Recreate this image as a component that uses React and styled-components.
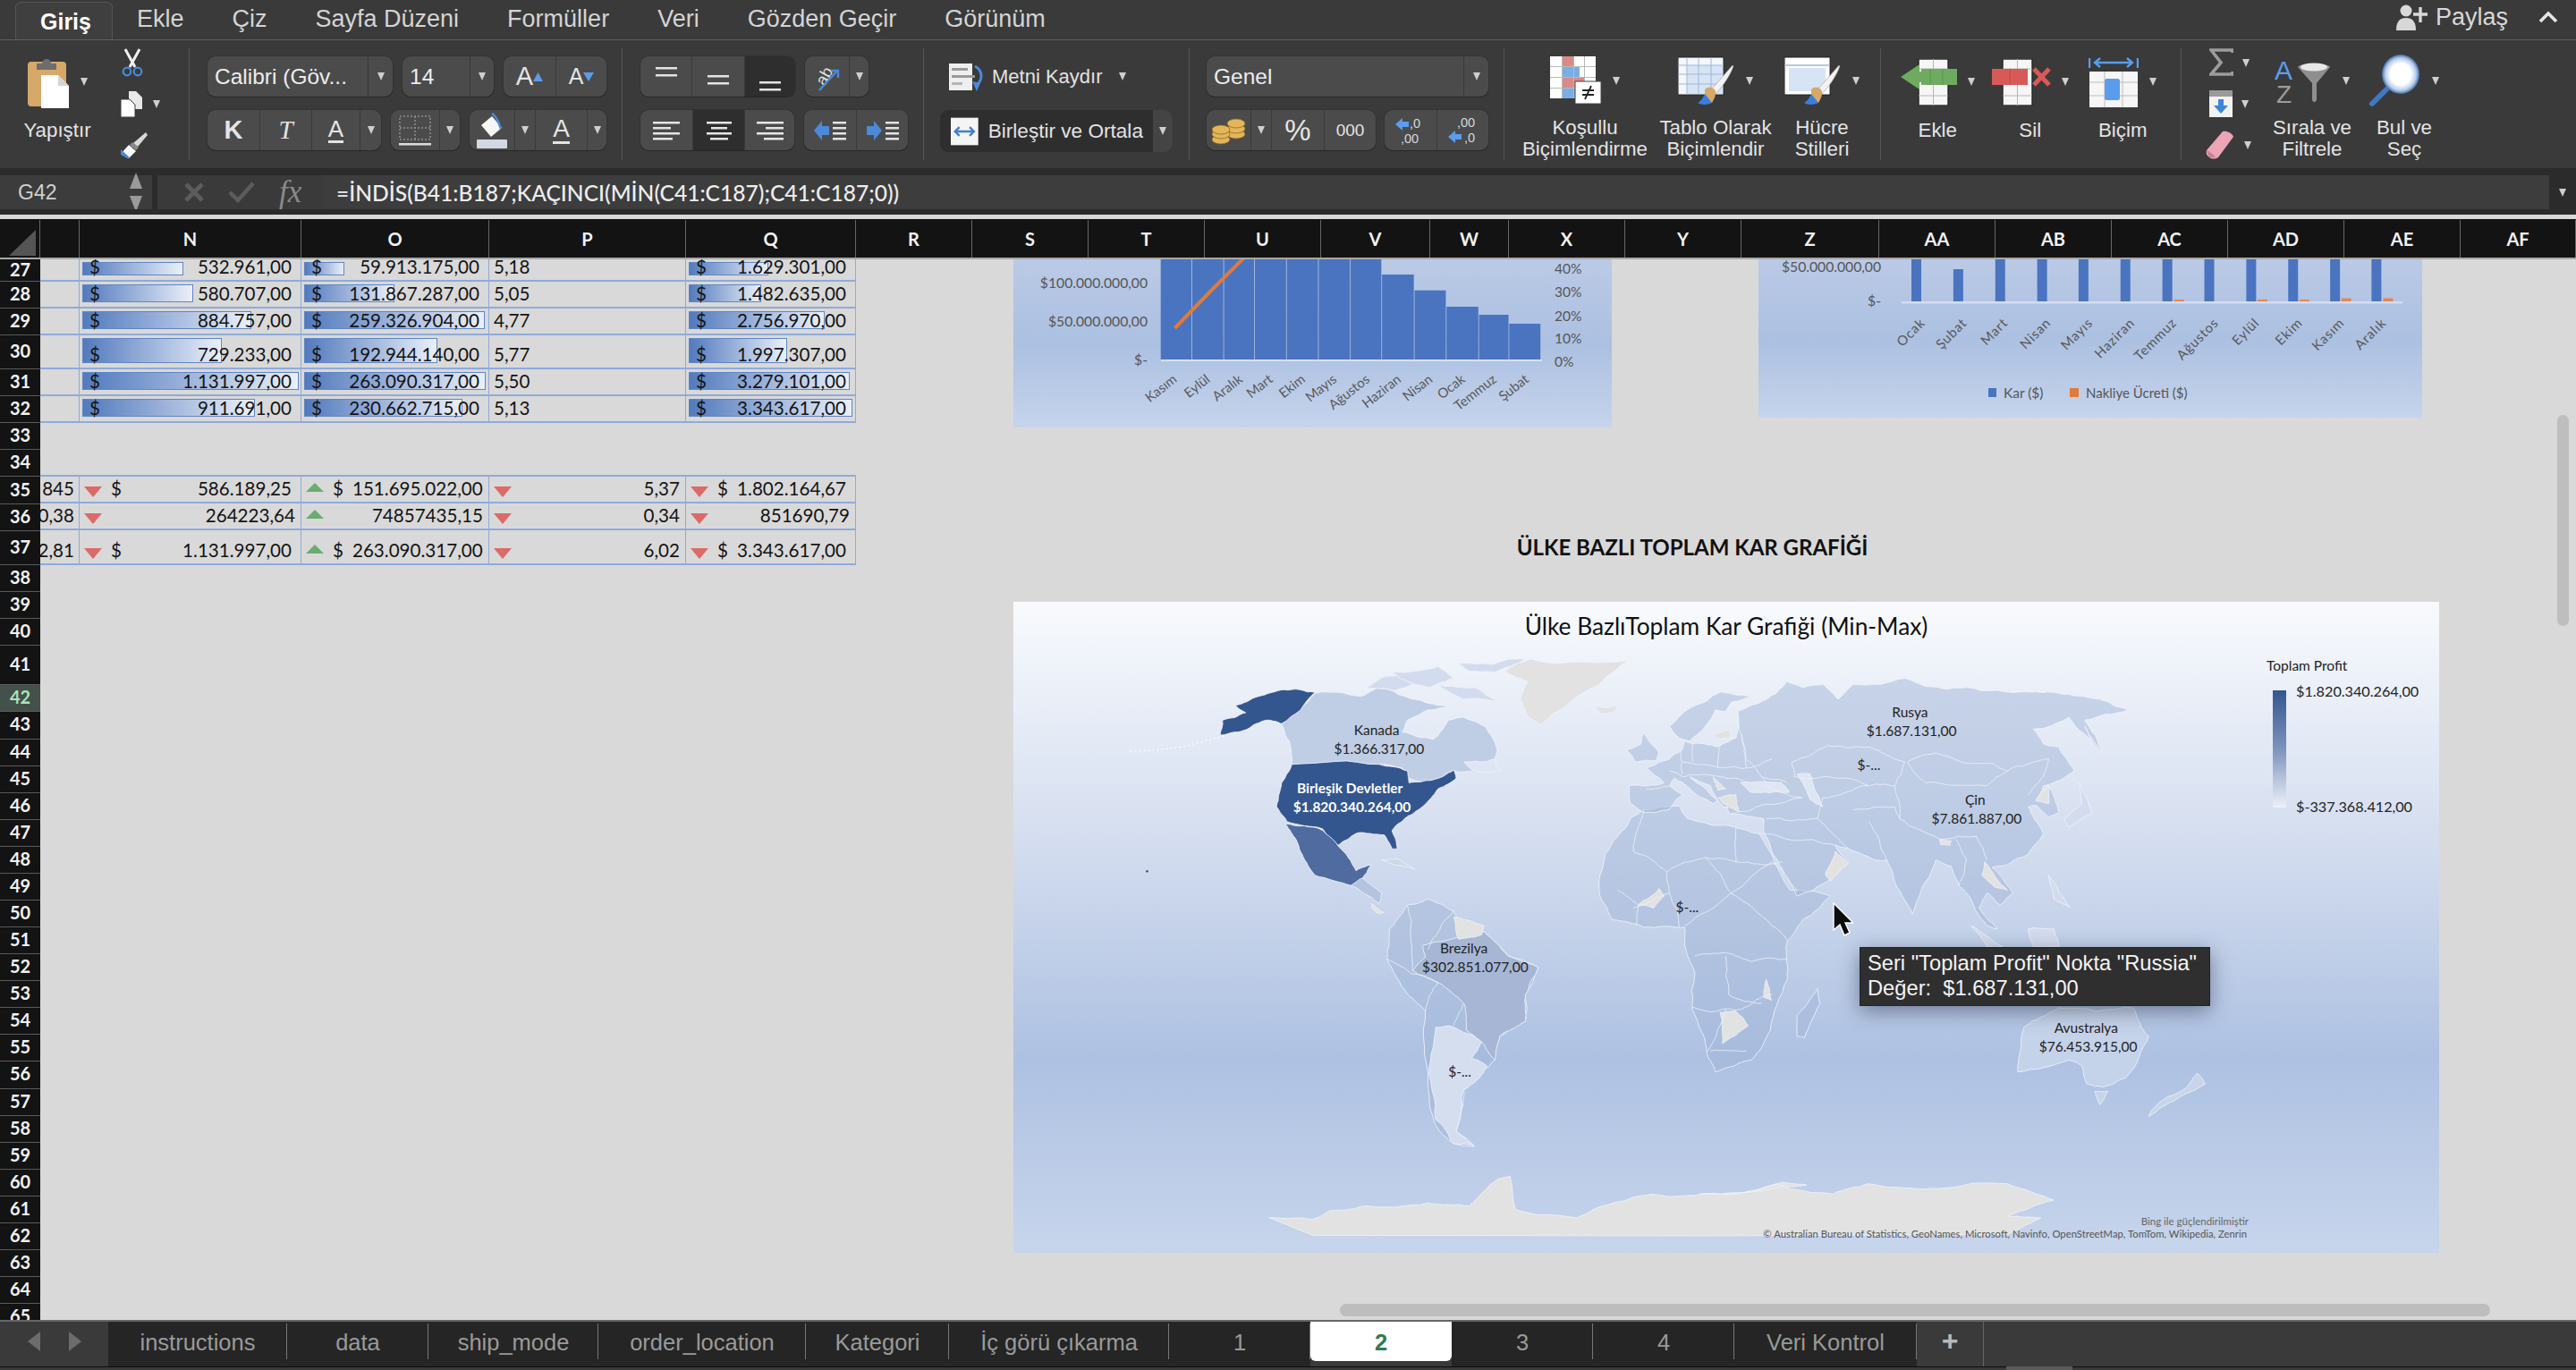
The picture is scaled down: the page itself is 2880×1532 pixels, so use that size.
import React from 'react';
import styled, { createGlobalStyle } from 'styled-components';

const GlobalStyle = createGlobalStyle`
  html, body { margin: 0; padding: 0; background: #2b2b2b; }
  * { box-sizing: border-box; }
`;

const ui = '"Liberation Sans", Arial, sans-serif';
const cal = 'Lato, "Open Sans", sans-serif';

const Page = styled.div`
  width: 2880px;
  height: 1532px;
  display: flex;
  flex-direction: column;
  overflow: hidden;
  font-family: ${ui};
  color: #e2e2e2;
`;

/* ---- menu tabs ---- */
const MenuBar = styled.div`
  height: 45px;
  flex: none;
  display: flex;
  align-items: stretch;
  padding-left: 17px;
  background: #3a3a3a;
  border-bottom: 1px solid #5c5c5c;
`;
const MenuTab = styled.div`
  padding: 0 ${p => (p.$active ? 23 : 27)}px 0 27px;
  font-size: ${p => (p.$active ? 25 : 27)}px;
  line-height: 42px;
  color: ${p => (p.$active ? '#fff' : '#d4d4d4')};
  font-weight: ${p => (p.$active ? 700 : 400)};
  background: ${p => (p.$active ? '#3f3f3f' : 'transparent')};
  border: ${p => (p.$active ? '1px solid #555' : 'none')};
  border-bottom: none;
  border-radius: 6px 6px 0 0;
  margin-top: ${p => (p.$active ? '2px' : '0')};
`;
const Share = styled.div`
  margin-left: auto;
  display: flex;
  align-items: center;
  gap: 8px;
  padding-right: 20px;
  font-size: 27px;
  color: #d8d8d8;
  height: 38px;
`;
const ShareGap = styled.span`
  width: 18px;
`;

/* ---- ribbon ---- */
const Ribbon = styled.div`
  height: 143px;
  flex: none;
  display: flex;
  padding-top: 9px;
  background: #3a3a3a;
`;
const Group = styled.div`
  width: ${p => p.$w}px;
  height: 125px;
  flex: none;
  display: flex;
  padding-left: ${p => p.$pl || 0}px;
  border-right: ${p => (p.$last ? 'none' : '1px solid #565656')};
`;
const Stack = styled.div`
  display: flex;
  flex-direction: column;
  gap: 15px;
  padding-top: 9px;
`;
const Line = styled.div`
  display: flex;
  gap: ${p => p.$gap || 11}px;
  height: 45px;
`;
const Seg = styled.div`
  width: ${p => p.$w}px;
  height: 45px;
  display: flex;
  align-items: stretch;
  background: #4b4b4b;
  border-radius: 9px;
  box-shadow: 0 1px 0 #262626, 0 0 0 1px #333;
  overflow: hidden;
`;
const SegBtn = styled.div`
  width: ${p => (p.$w ? `${p.$w}px` : 'auto')};
  flex: ${p => (p.$w ? 'none' : '1')};
  display: flex;
  align-items: center;
  justify-content: ${p => (p.$left ? 'flex-start' : 'center')};
  padding-left: ${p => (p.$left ? '8px' : '0')};
  font-size: 24.5px;
  background: ${p => (p.$on ? '#2e2e2e' : 'transparent')};
  color: #ededed;
  & + & { border-left: 1px solid #3a3a3a; }
`;
const GlyphA = styled.span`
  font-size: ${p => p.$size || 29}px;
  font-weight: ${p => (p.$bold ? 700 : 400)};
  font-style: ${p => (p.$italic ? 'italic' : 'normal')};
  font-family: ${p => (p.$serif ? '"Liberation Serif", serif' : ui)};
  color: #e4e4e4;
  line-height: 1;
  border-bottom: ${p => (p.$under ? '3px solid #e4e4e4' : 'none')};
`;
const Caret = styled.i`
  display: block;
  flex: none;
  width: 0;
  height: 0;
  border-left: 4.5px solid transparent;
  border-right: 4.5px solid transparent;
  border-top: 9px solid #cfcfcf;
`;
const BigTool = styled.div`
  width: ${p => p.$w}px;
  flex: none;
  display: flex;
  flex-direction: column;
  align-items: center;
`;
const ToolArt = styled.div`
  height: 80px;
  display: flex;
  align-items: center;
  gap: 12px;
  padding-bottom: 5px;
`;
const ToolLabel = styled.div`
  font-size: 22.3px;
  line-height: 24px;
  text-align: center;
  color: #e4e4e4;
  white-space: nowrap;
`;
const SmallCol = styled.div`
  width: ${p => p.$w}px;
  flex: none;
  display: flex;
  flex-direction: column;
  gap: 14px;
`;
const SmallTool = styled.div`
  height: 32px;
  display: flex;
  align-items: center;
  gap: 10px;
  padding-left: ${p => p.$pl || 0}px;
`;
const WrapBtn = styled.div`
  height: 45px;
  display: flex;
  align-items: center;
  gap: 8px;
  padding-left: 10px;
  font-size: 22px;
`;
const WrapGap = styled.span`
  width: 2px;
`;
const MergeBtn = styled.div`
  width: 260px;
  height: 47px;
  display: flex;
  align-items: center;
  gap: 11px;
  padding-left: 12px;
  font-size: 22.6px;
  white-space: nowrap;
  background: #2e2e2e;
  border-radius: 9px;
  position: relative;
  overflow: hidden;
`;
const MergeEnd = styled.div`
  margin-left: auto;
  width: 23px;
  height: 100%;
  background: #444;
  display: flex;
  align-items: center;
  justify-content: center;
`;

/* ---- formula bar ---- */
const Strip = styled.div`
  height: ${p => p.$h}px;
  flex: none;
  background: ${p => p.$c};
`;
const FormulaBar = styled.div`
  height: 38px;
  flex: none;
  display: flex;
  background: #2b2b2b;
  align-items: stretch;
`;
const NameBox = styled.div`
  width: 170px;
  flex: none;
  display: flex;
  align-items: center;
  justify-content: space-between;
  padding: 0 11px 0 20px;
  font-size: 23px;
  color: #d0d0d0;
  background: #3c3c3c;
`;
const Updown = styled.div`
  display: flex;
  flex-direction: column;
  gap: 8px;
`;
const FxZone = styled.div`
  width: 186px;
  margin-left: 6px;
  flex: none;
  display: flex;
  align-items: center;
  gap: 27px;
  padding-left: 30px;
  background: #3a3a3a;
`;
const FxMark = styled.span`
  font: italic 35px "Liberation Serif", serif;
  color: #8b8b8b;
`;
const FormulaField = styled.div`
  flex: 1;
  display: flex;
  align-items: center;
  padding-left: 14px;
  font-family: ${cal};
  font-size: 24.6px;
  font-weight: 500;
  color: #ededed;
  background: #3d3d3d;
`;
const FieldEnd = styled.div`
  width: 30px;
  flex: none;
  display: flex;
  align-items: center;
  justify-content: center;
  background: #2b2b2b;
`;

/* ---- sheet ---- */
const ColHeader = styled.div`
  height: 44px;
  flex: none;
  display: flex;
  background: #131313;
  border-bottom: 2px solid #a8a8a8;
`;
const Corner = styled.div`
  width: 45px;
  flex: none;
  border-right: 1px solid #666;
  display: flex;
  align-items: flex-end;
`;
const ColCell = styled.div`
  width: ${p => p.$w}px;
  flex: none;
  display: flex;
  align-items: center;
  justify-content: center;
  font-family: ${cal};
  font-size: 20px;
  font-weight: 700;
  color: #f2f2f2;
  border-right: 1px solid #666;
`;
const Body = styled.div`
  flex: 1;
  min-height: 0;
  display: flex;
  overflow: hidden;
`;
const RowHeads = styled.div`
  width: 45px;
  flex: none;
  display: flex;
  flex-direction: column;
  overflow: hidden;
  background: #131313;
`;
const RowHead = styled.div`
  height: ${p => p.$h}px;
  flex: none;
  display: flex;
  align-items: center;
  justify-content: center;
  padding-bottom: 3px;
  font-family: ${cal};
  font-size: 20px;
  font-weight: 700;
  color: ${p => (p.$on ? '#a9e4bd' : '#f2f2f2')};
  background: ${p => (p.$on ? '#44504a' : 'transparent')};
  border-bottom: 1.5px solid #5a5a5a;
`;
const Sheet = styled.div`
  flex: 1;
  position: relative;
  background: #d9d9d9;
  overflow: hidden;
`;
const DataRow = styled.div`
  height: ${p => p.$h}px;
  width: 912px;
  display: flex;
  border-bottom: ${p => (p.$ruled ? '2px solid #8eaadb' : 'none')};
`;
const DataCell = styled.div`
  width: ${p => p.$w}px;
  flex: none;
  position: relative;
  display: flex;
  align-items: flex-end;
  padding: 0 ${p => p.$pr ?? 10}px 2px ${p => p.$pl ?? 11}px;
  gap: ${p => (p.$tri ? 10 : 0)}px;
  font-family: ${cal};
  font-size: 20.6px;
  line-height: 26px;
  color: #141414;
  overflow: hidden;
  white-space: nowrap;
  border-right: 1.5px solid #8eaadb;
`;
const Clip = styled.div`
  width: 100%;
  display: flex;
  justify-content: flex-end;
  padding-right: 5px;
`;
const Money = styled.span`
  position: relative;
  margin-left: auto;
`;
const Dollar = styled.span`
  position: relative;
`;
const DataBar = styled.div`
  position: absolute;
  left: 3px;
  top: 3px;
  bottom: 5px;
  width: ${p => p.$w}px;
  background: linear-gradient(90deg, #527abd 0%, #97afd9 45%, #eaf0f9 100%);
  border: 1.5px solid #5f86c4;
`;
const Arrow = styled.svg`
  flex: none;
  width: 20px;
  height: ${p => (p.$up ? 10 : 12)}px;
  margin-bottom: ${p => (p.$up ? 9 : 3)}px;
`;

/* ---- floating objects on the sheet ---- */
const Floating = styled.div`
  position: absolute;
  left: ${p => p.$x - 45}px;
  top: ${p => p.$y - 288}px;
  width: ${p => p.$w}px;
  height: ${p => p.$h}px;
`;
const ChartTail = styled(Floating)`
  background: linear-gradient(180deg, #bdcce7 0%, #acc0e1 55%, #c6d4ec 100%);
`;
const ChartSvg = styled.svg`
  display: block;
  width: 100%;
  height: 100%;
`;
const SheetTitle = styled(Floating)`
  text-align: center;
  font-family: ${cal};
  font-size: 24px;
  font-weight: 700;
  color: #111;
  line-height: 30px;
  white-space: nowrap;
`;
const MapChart = styled(Floating)`
  background: linear-gradient(180deg, #f8fafd 0%, #dbe3f2 30%, #aec1e2 70%, #c7d5ec 100%);
`;
const MapTitle = styled.div`
  position: absolute;
  left: 0;
  right: 0;
  top: 11px;
  text-align: center;
  font-family: ${cal};
  font-size: 26.3px;
  line-height: 32px;
  color: #111;
`;
const Legend = styled.div`
  position: absolute;
  left: 1401px;
  top: 62px;
  font-family: ${cal};
  font-size: 15.5px;
  color: #222;
`;
const LegendBody = styled.div`
  position: relative;
  height: 132px;
  margin-top: 19px;
  padding-left: 7px;
`;
const LegendBar = styled.div`
  width: 15px;
  height: 131px;
  background: linear-gradient(180deg, #35568f 0%, #7c93bd 50%, #edf1f9 100%);
`;
const LegendTick = styled.div`
  position: absolute;
  left: 33px;
  top: ${p => p.$t}px;
  font-size: 16.2px;
  white-space: nowrap;
`;
const Tooltip = styled.div`
  position: absolute;
  left: 946px;
  top: 386px;
  width: 392px;
  height: 66px;
  padding: 3px 8px;
  background: #2f2f2f;
  border: 1px solid #1b2436;
  box-shadow: 0 6px 22px rgba(40, 50, 70, 0.5);
  font-size: 23.7px;
  line-height: 28px;
  color: #f4f4f4;
  white-space: pre;
`;
const Pointer = styled.svg`
  position: absolute;
  left: 915px;
  top: 336px;
`;

const VScroll = styled.div`
  position: absolute;
  left: 2814px;
  top: 174px;
  width: 13px;
  height: 236px;
  border-radius: 7px;
  background: #bebebe;
`;
const HScroll = styled.div`
  position: absolute;
  left: 1453px;
  top: 1168px;
  width: 1286px;
  height: 14px;
  border-radius: 7px;
  background: #bdbdbd;
`;

/* ---- sheet tabs ---- */
const TabBar = styled.div`
  height: 56px;
  flex: none;
  display: flex;
  background: #3a3a3a;
  border-top: 2px solid #666;
  position: relative;
`;
const TabNav = styled.div`
  width: 121px;
  height: 50px;
  flex: none;
  display: flex;
  align-items: center;
  justify-content: center;
  gap: 32px;
  background: #3a3a3a;
  padding-bottom: 6px;
`;
const SheetTab = styled.div`
  width: ${p => p.$w}px;
  height: ${p => (p.$active ? 44 : 50)}px;
  flex: none;
  display: flex;
  align-items: flex-start;
  justify-content: center;
  padding-top: 9px;
  font-size: 25.5px;
  color: ${p => (p.$active ? '#2f7a52' : '#9a9a9a')};
  font-weight: ${p => (p.$active ? 700 : 400)};
  background: ${p => (p.$active ? '#fff' : '#252525')};
  border-radius: ${p => (p.$active ? '0 0 6px 6px' : '0')};
  position: relative;
  &::after {
    content: '';
    position: absolute;
    right: 0;
    top: 2px;
    height: 40px;
    border-right: ${p => (p.$active ? 'none' : '1px solid #777')};
  }
`;
const AddTab = styled.div`
  width: 75px;
  height: 50px;
  flex: none;
  display: flex;
  align-items: center;
  justify-content: center;
  padding-bottom: 8px;
  background: #3a3a3a;
  border-right: 1px solid #666;
  font-size: 32px;
  font-weight: 700;
  color: #b8b8b8;
`;
const BottomLine = styled.div`
  position: absolute;
  left: 0;
  right: 0;
  bottom: 0;
  height: 4px;
  background: #3a3a3a;
  border-top: 1px solid #0c0c0c;
`;
const BottomThumb = styled.div`
  position: absolute;
  left: 2243px;
  bottom: 0;
  width: 74px;
  height: 4px;
  background: #5a5a5a;
`;

/* ---- ribbon icons ---- */
const PasteIcon = () => (
  <svg width="47" height="58" viewBox="0 0 47 58">
    <rect x="0" y="6" width="43" height="50" rx="4" fill="#d6a86a" />
    <path d="M10 15V8h6a5 5 0 0 1 10 0h6v7z" fill="#6d6d6d" />
    <path d="M15 21h19l12 12v25H15z" fill="#fff" />
    <path d="M34 21v12h12z" fill="#d5d5d5" />
  </svg>
);
const CutIcon = () => (
  <svg width="26" height="32" viewBox="0 0 26 32">
    <path d="M5 1l11 20M21 1L10 21" stroke="#f0f0f0" strokeWidth="3" fill="none" />
    <circle cx="7" cy="26" r="4.3" fill="none" stroke="#4a8ad8" strokeWidth="2.2" />
    <circle cx="19" cy="26" r="4.3" fill="none" stroke="#4a8ad8" strokeWidth="2.2" />
  </svg>
);
const CopyIcon = () => (
  <svg width="26" height="29" viewBox="0 0 26 29">
    <path d="M9 0h8l7 7v13H9z" fill="#e8e8e8" />
    <path d="M0 9h10l6 6v14H0z" fill="#fff" stroke="#3a3a3a" strokeWidth="1" />
  </svg>
);
const PainterIcon = () => (
  <svg width="34" height="30" viewBox="0 0 34 30">
    <path d="M31 1l2 3-11 13-5-4z" fill="#d8d8d8" />
    <path d="M16 12l7 6-3 3-7-6z" fill="#8a8a8a" />
    <path d="M12 15l8 7-8 8-9-5z" fill="#fff" />
    <path d="M3 20l10 9-3 1-7-4z" fill="#4a8ad8" />
  </svg>
);
const ParaLines = ({ rows, w = 26 }) => (
  <svg width={w} height="22" viewBox={`0 0 ${w} 22`}>
    {rows.map(([x, y, l]) => (
      <rect key={y} x={x} y={y} width={l} height="2.5" fill="#e6e6e6" />
    ))}
  </svg>
);
const BorderIcon = () => (
  <svg width="36" height="34" viewBox="0 0 36 34">
    <path d="M1 1h34v26H1zM18 1v26M1 14h34" fill="none" stroke="#8f8f8f" strokeWidth="1.5" strokeDasharray="2 2" />
    <rect x="0" y="31" width="36" height="2.5" fill="#ddd" />
  </svg>
);
const BucketIcon = () => (
  <svg width="36" height="40" viewBox="0 0 36 40">
    <path d="M6 14L18 4l11 13-12 10z" fill="#f6f6f6" />
    <path d="M18 1c4 2 7 8 10 17" fill="none" stroke="#4a8ad8" strokeWidth="2.5" />
    <rect x="1" y="30" width="34" height="10" rx="1" fill="#d3d9e2" />
  </svg>
);
const VAlignIcon = ({ y }) => (
  <svg width="26" height="34" viewBox="0 0 26 34">
    <rect x="1" y={y} width="24" height="2.5" fill="#e4e4e4" />
    <rect x="1" y={y + 8} width="24" height="2.5" fill="#e4e4e4" />
  </svg>
);
const OrientIcon = () => (
  <svg width="30" height="32" viewBox="0 0 30 32">
    <text x="2" y="22" transform="rotate(-60 11 16)" fontFamily={ui} fontSize="18" fill="#e4e4e4">ab</text>
    <path d="M6 31L27 8M19 9h8v8" stroke="#4a8ad8" strokeWidth="2.4" fill="none" />
  </svg>
);
const IndentIcon = ({ flip }) => (
  <svg width="38" height="26" viewBox="0 0 38 26">
    <path d={flip ? 'M1 8h8V2l9 11-9 11v-6H1z' : 'M18 8h-8V2L1 13l9 11v-6h8z'} fill="#4a8ad8" />
    {[3, 9, 15, 21].map(y => (
      <rect key={y} x="22" y={y} width="15" height="2.5" fill="#e4e4e4" />
    ))}
  </svg>
);
const WrapIcon = () => (
  <svg width="40" height="32" viewBox="0 0 40 32">
    <rect x="0" y="1" width="26" height="30" fill="#efefef" />
    <rect x="3" y="6" width="18" height="3" fill="#9a9a9a" />
    <rect x="3" y="14" width="26" height="3" fill="#9a9a9a" />
    <rect x="3" y="22" width="12" height="3" fill="#b5b5b5" />
    <path d="M29 4c9 5 9 15 2 21" fill="none" stroke="#4a8ad8" strokeWidth="3" />
    <path d="M26 21l9 2-4 9z" fill="#4a8ad8" />
  </svg>
);
const MergeIcon = () => (
  <svg width="32" height="32" viewBox="0 0 32 32">
    <rect width="32" height="32" fill="#f4f4f4" />
    <path d="M5 16h22M10 11l-5 5 5 5M22 11l5 5-5 5" fill="none" stroke="#3f7fd0" strokeWidth="2.5" />
  </svg>
);
const CoinsIcon = () => (
  <svg width="38" height="32" viewBox="0 0 38 32">
    <g fill="#e4b65a" stroke="#8a6a2a" strokeWidth="0.8">
      <ellipse cx="27" cy="20" rx="10" ry="5" />
      <ellipse cx="27" cy="14" rx="10" ry="5" />
      <ellipse cx="27" cy="8" rx="10" ry="5" />
      <ellipse cx="10" cy="26" rx="10" ry="5" />
      <ellipse cx="10" cy="20" rx="10" ry="5" />
      <ellipse cx="10" cy="15" rx="10" ry="5" />
    </g>
  </svg>
);
const DecIcon = ({ more }) => (
  <svg width="38" height="34" viewBox="0 0 38 34" fontFamily={ui} fontSize="14.5" fill="#d8d8d8">
    {more ? (
      <>
        <text x="12" y="13">,00</text>
        <path d="M16 24l-8-7v4H1v6h7v4z" fill="#5b9cec" transform="matrix(-1 0 0 1 18 0)" />
        <text x="20" y="30">,0</text>
      </>
    ) : (
      <>
        <path d="M2 10l8-7v4h7v6h-7v4z" fill="#5b9cec" />
        <text x="18" y="14">,0</text>
        <text x="8" y="31">,00</text>
      </>
    )}
  </svg>
);
const CondIcon = () => (
  <svg width="58" height="54" viewBox="0 0 58 54">
    <rect x="0" y="0" width="51" height="47" fill="#fff" />
    <rect x="14" y="0" width="12" height="11" fill="#d98a85" />
    <rect x="14" y="11" width="19" height="13" fill="#79aee6" />
    <rect x="14" y="24" width="24" height="12" fill="#d98a85" />
    <rect x="14" y="36" width="14" height="11" fill="#79aee6" />
    <path d="M13.5 0v47M26.5 0v47M38.5 0v47M0 11.5h51M0 23.5h51M0 35.5h51" stroke="#b9b9b9" strokeWidth="1" />
    <rect x="28" y="28" width="29" height="25" fill="#fff" stroke="#444" strokeWidth="1" />
    <path d="M36 38h13M36 43h13M46 33l-7 15" stroke="#222" strokeWidth="1.8" fill="none" />
  </svg>
);
const BrushOver = () => (
  <g>
    <path d="M61 10C52 20 44 30 36 38l5 5C50 34 58 22 62 11z" fill="#f2f2f2" stroke="#999" strokeWidth="0.6" />
    <path d="M30 37c4-4 10-3 12 2 1 5-3 11-4 13l-8-2z" fill="#d8a868" />
    <path d="M22 52c4-2 6-6 8-10l8 10c-3 2-12 3-16 0z" fill="#3a7fdc" />
  </g>
);
const TableIcon = () => (
  <svg width="64" height="54" viewBox="0 0 64 54">
    <rect x="0" y="1" width="51" height="42" fill="#f4f7fc" stroke="#222" strokeWidth="1" />
    <rect x="10" y="10" width="40" height="32" fill="#d6e4f6" />
    <path d="M10 1v42M23 1v42M37 1v42M0 10h51M0 20h51M0 31h51" stroke="#9fb6d6" strokeWidth="1" />
    <BrushOver />
  </svg>
);
const StyleIcon = () => (
  <svg width="64" height="54" viewBox="0 0 64 54">
    <rect x="0" y="1" width="51" height="42" fill="#fff" stroke="#222" strokeWidth="1" />
    <rect x="5" y="13" width="41" height="26" fill="#d6e4f6" />
    <path d="M0 10h51" stroke="#9fb6d6" strokeWidth="1.5" />
    <BrushOver />
  </svg>
);
const GridCol = ({ x, w }) => (
  <g>
    <rect x={x} y="0" width={w} height="52" fill="#f6f6f6" stroke="#242424" strokeWidth="1.4" />
    <path d={`M${x + w / 2} 0v52M${x} 11h${w}M${x} 41h${w}`} stroke="#b5b5b5" strokeWidth="1" />
  </g>
);
const InsertIcon = () => (
  <svg width="64" height="52" viewBox="0 0 64 52">
    <GridCol x={21} w={33} />
    <rect x="24" y="11" width="40" height="18" fill="#6eab60" />
    <path d="M34 11v18M48 11v18" stroke="#5a9550" />
    <path d="M22 6L1 20l21 14V26h3V14h-3z" fill="#6eab60" />
  </svg>
);
const DeleteIcon = () => (
  <svg width="66" height="52" viewBox="0 0 66 52">
    <GridCol x={12} w={33} />
    <rect x="0" y="11" width="40" height="18" fill="#d85a56" />
    <path d="M20 11v18" stroke="#b84a46" />
    <path d="M47 11l17 18M64 11L47 29" stroke="#d85a56" strokeWidth="5" />
  </svg>
);
const FormatIcon = () => (
  <svg width="56" height="56" viewBox="0 0 56 56">
    <path d="M1 1v11M55 1v11M7 6h42M13 1L7 6l6 5M43 1l6 5-6 5" stroke="#5b9cec" strokeWidth="2.4" fill="none" />
    <rect x="1" y="16" width="54" height="40" fill="#f6f6f6" />
    <path d="M1 28h54M1 43h54M18 16v40M38 16v40" stroke="#bcbcbc" strokeWidth="1" />
    <rect x="18" y="24" width="17" height="24" rx="2.5" fill="#5b9cec" />
  </svg>
);
const SigmaIcon = () => (
  <svg width="27" height="32" viewBox="0 0 27 32">
    <path d="M26 5V2H2l11 14L2 29h24v-3" fill="none" stroke="#9c9c9c" strokeWidth="3.6" />
  </svg>
);
const FillIcon = () => (
  <svg width="26" height="30" viewBox="0 0 26 30">
    <rect width="26" height="30" fill="#f2f2f2" />
    <rect width="26" height="7" fill="#9a9a9a" />
    <path d="M10 10h6v7h5l-8 9-8-9h5z" fill="#3f84dc" />
  </svg>
);
const EraserIcon = () => (
  <svg width="34" height="32" viewBox="0 0 34 32">
    <path d="M20 1c4-1 11 2 12 6L15 30c-3 2-7 2-10 0-3-2-4-5-3-8z" fill="#eba5b4" />
    <path d="M2 22c3 1 8 5 10 8l3 0L5 30z" fill="#c77f91" />
  </svg>
);
const SortIcon = () => (
  <svg width="64" height="50" viewBox="0 0 64 50" fontFamily={ui}>
    <text x="0" y="24" fontSize="30" fill="#5b9cec">A</text>
    <text x="2" y="50" fontSize="28" fill="#9c9c9c">Z</text>
    <path d="M26 10c2-5 34-5 36 0L47 28v18c0 4-5 4-5 0V28z" fill="#8f8f8f" />
    <ellipse cx="44" cy="10" rx="15" ry="4.5" fill="#e8e8e8" />
  </svg>
);
const FindIcon = () => (
  <svg width="58" height="58" viewBox="0 0 58 58">
    <defs>
      <radialGradient id="lens">
        <stop offset="0.55" stopColor="#fff" />
        <stop offset="0.82" stopColor="#b8cdea" />
        <stop offset="1" stopColor="#3f6eab" />
      </radialGradient>
    </defs>
    <path d="M20 38L3 55" stroke="#3f78c0" strokeWidth="6" strokeLinecap="round" />
    <ellipse cx="35" cy="22" rx="21" ry="22" fill="url(#lens)" />
  </svg>
);
const PersonPlus = () => (
  <svg width="36" height="30" viewBox="0 0 36 30">
    <circle cx="11" cy="8" r="6.5" fill="#d8d8d8" />
    <path d="M0 30c0-10 4-14 11-14s11 4 11 14z" fill="#d8d8d8" />
    <path d="M27 4v17M19 12h16" stroke="#d8d8d8" strokeWidth="3.4" />
  </svg>
);
const ChevronUp = () => (
  <svg width="22" height="14" viewBox="0 0 22 14">
    <path d="M2 12l9-9 9 9" fill="none" stroke="#e6e6e6" strokeWidth="3.6" />
  </svg>
);
const UpTri = () => (
  <svg width="14" height="18" viewBox="0 0 14 18"><path d="M7 0l7 18H0z" fill="#9a9a9a" /></svg>
);
const DownTri = () => (
  <svg width="14" height="18" viewBox="0 0 14 18"><path d="M0 0h14L7 18z" fill="#9a9a9a" /></svg>
);
const CrossMark = () => (
  <svg width="22" height="22" viewBox="0 0 22 22"><path d="M2 2l18 18M20 2L2 20" stroke="#5c5c5c" strokeWidth="5" /></svg>
);
const CheckMark = () => (
  <svg width="30" height="24" viewBox="0 0 30 24"><path d="M2 12l9 9L28 2" fill="none" stroke="#5c5c5c" strokeWidth="4.5" /></svg>
);
const SmallTriUp = ({ c }) => (
  <svg width="11" height="10" viewBox="0 0 11 10"><path d="M5.5 0L11 10H0z" fill={c} /></svg>
);
const SmallTriDown = ({ c }) => (
  <svg width="12" height="10" viewBox="0 0 12 10"><path d="M0 0h12L6 10z" fill={c} /></svg>
);

/* ---- sheet data ---- */
const COLS = [['', 44], ['N', 248], ['O', 210], ['P', 220], ['Q', 190], ['R', 130], ['S', 130], ['T', 130], ['U', 130], ['V', 122], ['W', 88], ['X', 130], ['Y', 130], ['Z', 154], ['AA', 130], ['AB', 130], ['AC', 130], ['AD', 130], ['AE', 130], ['AF', 129]];

const rowHeights = { 27: 25, 30: 38, 37: 38.5, 41: 44 };
const ROW_NUMS = Array.from({ length: 39 }, (_, i) => i + 27);

const BAR_ROWS = [
  { h: 25, n: ['532.961,00', 113], o: ['59.913.175,00', 45], p: '5,18', q: ['1.629.301,00', 89] },
  { h: 30, n: ['580.707,00', 124], o: ['131.867.287,00', 101], p: '5,05', q: ['1.482.635,00', 81] },
  { h: 30, n: ['884.757,00', 189], o: ['259.326.904,00', 202], p: '4,77', q: ['2.756.970,00', 152] },
  { h: 38, n: ['729.233,00', 156], o: ['192.944.140,00', 149], p: '5,77', q: ['1.997.307,00', 110] },
  { h: 30, n: ['1.131.997,00', 242], o: ['263.090.317,00', 203], p: '5,50', q: ['3.279.101,00', 180] },
  { h: 30, n: ['911.691,00', 193], o: ['230.662.715,00', 177], p: '5,13', q: ['3.343.617,00', 183] },
];
const ICON_ROWS = [
  { h: 30, m: '845', n: '586.189,25', o: '151.695.022,00', p: '5,37', q: '1.802.164,67', cur: true },
  { h: 30, m: '0,38', n: '264223,64', o: '74857435,15', p: '0,34', q: '851690,79', cur: false },
  { h: 38.5, m: '2,81', n: '1.131.997,00', o: '263.090.317,00', p: '6,02', q: '3.343.617,00', cur: true },
];

const BarCell = ({ w, val }) => (
  <DataCell $w={w}>
    <DataBar $w={val[1]} />
    <Dollar>$</Dollar>
    <Money>{val[0]}</Money>
  </DataCell>
);
const DownArrow = () => (
  <Arrow viewBox="0 0 20 12"><path d="M0 0h20L10 12z" fill="#dc6a68" /></Arrow>
);
const UpArrow = () => (
  <Arrow $up viewBox="0 0 20 10"><path d="M10 0l10 10H0z" fill="#69ad70" /></Arrow>
);

const MONTHS_A = [['Kasım', 340], ['Eylül', 398], ['Aralık', 455], ['Mart', 508], ['Ekim', 565], ['Mayıs', 620], ['Ağustos', 678], ['Haziran', 733], ['Nisan', 788], ['Ocak', 845], ['Temmuz', 900], ['Şubat', 957]];
const MONTHS_B = [['Ocak', 405], ['Şubat', 480], ['Mart', 553], ['Nisan', 630], ['Mayıs', 705], ['Haziran', 780], ['Temmuz', 855], ['Ağustos', 930], ['Eylül', 1003], ['Ekim', 1080], ['Kasım', 1155], ['Aralık', 1230]];
const PARETO = [[310, 280], [365, 280], [421, 280], [475, 280], [531, 280], [587, 280], [643, 280], [698, 305], [755, 322.7], [811, 341], [868, 350], [921, 360]];
const KAR_X = [388, 463, 538, 613, 687, 762, 837, 912, 987, 1062, 1137, 1211];

const LeftAxis = ({ x, items }) =>
  items.map(([t, y]) => (
    <text key={t} x={x} y={y} textAnchor="end" fontFamily={cal} fontSize="15.7" fill="#555">{t}</text>
  ));

const ParetoChart = () => (
  <ChartTail $x={1133} $y={270} $w={669} $h={206}>
    <ChartSvg viewBox="1133 270 669 206">
      {PARETO.map(([px, top], i) => {
        const x = 1100 + px / 1.568;
        const next = i < 11 ? 1100 + PARETO[i + 1][0] / 1.568 : 1723;
        return <rect key={px} x={x} y={top} width={next - x - 0.8} height={400 - top} fill="#4a74bf" />;
      })}
      <rect x="1298" y="400" width="426" height="2" fill="#d8dfef" />
      <polyline points="1313.5,365 1352,325 1392,285" fill="none" stroke="#e07b39" strokeWidth="4" />
      <LeftAxis x={1283} items={[['$100.000.000,00', 320], ['$50.000.000,00', 363], ['$-', 406]]} />
      {[['40%', 304], ['30%', 330], ['20%', 357], ['10%', 382], ['0%', 408]].map(([t, y]) => (
        <text key={t} x="1738" y={y} fontFamily={cal} fontSize="15.5" fill="#555">{t}</text>
      ))}
      {MONTHS_A.map(([m, px]) => {
        const x = 1100 + px / 1.568;
        return <text key={m} x={x} y="424" textAnchor="end" transform={`rotate(-38 ${x} 424)`} fontFamily={cal} fontSize="15" fill="#595959">{m}</text>;
      })}
    </ChartSvg>
  </ChartTail>
);

const ProfitChart = () => (
  <ChartTail $x={1966} $y={270} $w={742} $h={195}>
    <ChartSvg viewBox="1966 270 742 195">
      {KAR_X.map((px, i) => {
        const x = 1900 + px / 1.6;
        const top = i === 1 ? 299 : 280;
        return <rect key={px} x={x - 5.5} y={top} width="11" height={335 - top} fill="#4a74bf" />;
      })}
      {[[858, 1], [1007, 1], [1082, 1], [1157, 2.5], [1232, 2.5]].map(([px, h]) => (
        <rect key={px} x={1900 + px / 1.6 - 5.5} y={334 - h} width="11" height={h + 1} fill="#e0885a" />
      ))}
      <rect x="2126" y="335" width="560" height="2.5" fill="#d5dcec" />
      <LeftAxis x={2103} items={[['$50.000.000,00', 302], ['$-', 340]]} />
      {MONTHS_B.map(([m, px]) => {
        const x = 1900 + px / 1.6;
        return <text key={m} x={x} y="360" textAnchor="end" letterSpacing="0.8" transform={`rotate(-45 ${x} 360)`} fontFamily={cal} fontSize="15" fill="#595959">{m}</text>;
      })}
      <rect x="2223" y="432" width="9" height="10" fill="#4a74bf" />
      <text x="2240" y="443" fontFamily={cal} fontSize="15.5" fill="#555">Kar ($)</text>
      <rect x="2314" y="432" width="10" height="10" fill="#e07b39" />
      <text x="2332" y="443" fontFamily={cal} fontSize="15" fill="#555">Nakliye Ücreti ($)</text>
    </ChartSvg>
  </ChartTail>
);

/* map outlines are traced from crops, so they go through the crop offsets */
const tr = (ox, oy) => s =>
  s.trim().split(/\s+/).map(p => {
    const [x, y] = p.split(',').map(Number);
    return `${(ox + x / 1.742).toFixed(1)},${(oy + y / 3).toFixed(1)}`;
  }).join(' ');
const a = tr(1120, 660);
const b = tr(1900, 660);
const c = tr(1120, 1050);
const d = tr(1900, 1050);

// fixed-seed midpoint wobble, straight polygon edges read badly as coastline
let seed = 4711;
const wobble = () => {
  seed = (seed * 16807) % 2147483647;
  return seed / 2147483647 - 0.5;
};
const rough = (pts, closed = true, amp = 0.13) => {
  let list = pts.trim().split(/\s+/).map(p => p.split(',').map(Number));
  for (let pass = 0; pass < 3; pass++) {
    const out = [];
    list.forEach((p, i) => {
      out.push(p);
      const q = list[i + 1] || (closed ? list[0] : null);
      if (!q) return;
      const dx = q[0] - p[0];
      const dy = q[1] - p[1];
      const k = wobble() * amp;
      out.push([(p[0] + q[0]) / 2 - dy * k, (p[1] + q[1]) / 2 + dx * k]);
    });
    list = out;
  }
  return list.map(p => `${p[0].toFixed(1)},${p[1].toFixed(1)}`).join(' ');
};

const LAND = 'rgba(162,181,216,0.5)';
const NODATA = '#e2e2e2';
const SHAPES = [
  // Greenland, Iceland
  [NODATA, a('980,265 1030,225 1220,230 1170,300 1100,380 1050,445 1025,420 1010,360 1025,300')],
  [NODATA, a('1155,385 1200,380 1190,405 1165,405')],
  // Canada and the arctic islands
  ['#bfcde5', a('610,340 700,350 730,322 785,350 870,385 830,395 790,430 780,470 840,495 870,430 900,420 940,450 965,530 950,590 880,600 820,640 790,620 780,590 735,578 565,578 560,500 545,445')],
  ['#d3dcee', a('710,320 745,285 790,270 800,310 760,330')],
  ['#d3dcee', a('760,270 850,250 880,290 830,320')],
  ['#d3dcee', a('890,240 1020,222 960,270 910,265')],
  ['#d3dcee', a('850,310 920,320 970,370 900,360')],
  ['#dfe6f3', a('900,570 960,560 970,598 920,600')],
  // USA with Alaska, Mexico, Central America
  ['#34568f', a('610,337 545,442 520,430 470,465 425,480 430,430 475,405 455,380 500,350 550,328')],
  ['#34568f', a('565,578 735,578 790,600 793,640 840,630 880,597 885,625 850,660 820,720 800,745 770,780 760,800 770,862 760,862 745,815 690,810 655,850 625,795 555,770 535,720 545,640')],
  ['#4f6ba0', a('552,778 625,800 655,852 690,935 720,915 700,965 680,985 610,950 585,880 565,810')],
  ['#b4c3df', a('680,985 702,960 740,1010 735,1045 705,1010')],
  [NODATA, a('720,1045 745,1075 735,1080 720,1060')],
  ['#ccd7ea', a('740,900 770,895 805,930 760,912')],
  // South America
  [LAND, c('790,-120 830,-140 880,-100 890,-60 940,-30 985,50 1045,90 1020,180 1020,270 970,320 960,400 935,440 930,460 900,500 895,570 885,640 920,690 880,680 845,620 830,470 825,235 790,180 750,60 755,-40 770,-70')],
  ['#a6b6d4', c('820,15 885,-10 940,-30 985,50 1045,90 1020,180 1020,270 970,320 960,400 935,340 905,300 900,210 850,140 800,100 825,55')],
  ['#d5deef', c('845,290 870,285 905,310 935,340 915,395 945,420 930,460 900,500 895,570 885,640 920,690 880,680 845,600 835,470')],
  [NODATA, a('880,1090 905,1100 940,1120 935,1150 890,1165')],
  // Africa
  [LAND, a('1165,950 1175,880 1225,760 1250,730 1320,718 1335,760 1430,790 1475,810 1535,1000 1614,1020 1560,1100 1530,1170 1528,1240') + ' ' + c('1530,130 1497,300 1460,400 1390,440 1375,390 1345,230 1350,110 1330,10 1330,-45 1250,-45 1190,-70 1165,-150')],
  [NODATA, a('1240,1050 1280,995 1290,1020 1270,1060')],
  [NODATA, d('40,240 70,235 95,285 45,345')],
  [NODATA, d('130,130 140,200 125,190')],
  [LAND, d('230,160 235,210 205,325 190,320 190,250')],
  // Eurasia
  [LAND, a('1222,650 1290,640 1255,590 1300,560 1325,530 1330,500 1345,510 1395,520 1430,490 1435,430') + ' ' + b('75,400 150,340 170,300 200,320 240,310 270,360 300,310 400,290 430,310 520,320 640,335 700,340 780,360 835,395 790,410 750,430 785,540 745,470 720,420 650,460 670,510 700,520 730,600 690,640 670,650 660,690 680,650 700,740 680,755 655,715 640,720 670,810 640,880 600,915 570,925 590,960 610,1010 585,1050 560,1010 545,1060 580,1130 560,1120 520,1010 505,985 490,920 460,900 430,1010 415,1080 395,1020 365,900 345,900 290,860 265,850 290,905 250,970 190,1020 165,950 125,805 125,760 60,745 50,700') + ' ' + a('1435,735 1405,720 1380,650 1340,620 1395,700 1385,710 1340,660 1310,625 1300,650 1325,680 1300,730 1250,740 1225,710')],
  [LAND, a('1300,450 1340,390 1400,335 1470,345 1420,370 1410,400 1390,395 1370,450 1340,500 1320,490')],
  [LAND, a('1218,530 1245,510 1250,470 1280,540 1275,565 1235,570')],
  ['#dfe6f3', b('80,640 160,640 175,672 100,672')],
  ['#dfe6f3', b('190,610 215,610 240,720 215,695')],
  [NODATA, a('1385,475 1420,465 1420,490 1390,490')],
  [NODATA, a('1395,690 1430,680 1435,735 1405,710')],
  [NODATA, a('1385,620 1410,660 1395,665')],
  [NODATA, b('265,870 290,910 255,970 245,945')],
  [NODATA, b('555,905 600,1000 575,990 550,950')],
  [NODATA, b('655,700 680,650 680,710')],
  [NODATA, b('468,830 490,835 488,850 470,848')],
  // islands
  ['#d3dcee', b('740,640 765,740 720,790 710,760 745,710')],
  ['#d3dcee', b('750,450 790,540 770,520')],
  ['#d3dcee', b('680,950 722,1060 690,1030')],
  ['#d3dcee', b('530,1120 590,1190 560,1190')],
  ['#d3dcee', b('640,1130 690,1130 700,1190 650,1190')],
  // Australia, New Zealand
  ['rgba(200,213,235,0.85)', d('632,290 700,225 845,225 875,320 830,460 785,490 755,480 745,420 720,400 620,440 625,370')],
  ['#c7d4ea', d('770,505 795,505 780,550')],
  ['#c7d4ea', d('970,445 985,480 930,530 875,590 880,570 950,490')],
].map(([fill, pts]) => [fill, rough(pts)]);
// Antarctica keeps its flat lower edge
const ANTARCTICA = rough(c('520,928 605,935 640,905 705,890 830,880 910,890 945,830 965,800 990,790 1000,900 1030,915 1120,930 1190,880 1265,850 1400,850 1520,810 1568,820') + ' ' + d('0,850 80,850 150,815 260,850 330,815 600,815 690,870 600,925 665,930'), false, 0.1) + ' ' + d('600,985 0,990') + ' ' + c('605,988');
const BORDERS = [
  // Africa
  a('1230,870 1295,940 1370,890 1430,905 1430,790'), a('1230,870 1250,730'), a('1295,940 1300,1010 1230,1060'),
  a('1370,890 1420,1010 1500,905'), a('1430,905 1520,905'), a('1420,1010 1330,1120'), a('1420,1010 1500,1120 1530,1170'),
  a('1300,1010 1320,1125'), a('1200,1000 1240,1050 1235,1120'), a('1500,905 1550,1005'),
  c('1350,50 1410,40 1460,70 1530,60'), c('1345,222 1440,230 1500,180'), c('1410,230 1375,370'), c('1380,370 1450,370'), c('1410,50 1415,180 1480,210'),
  // Europe
  a('1300,650 1255,660'), a('1322,530 1325,610'), a('1325,570 1400,590 1450,590 1500,560'), a('1400,510 1395,590'), a('1440,480 1450,590'), a('1300,600 1330,620 1400,620 1450,640'),
  a('1345,510 1345,570'), a('1480,620 1530,640'),
  // Asia
  b('180,570 250,515 330,520 400,570 380,650 330,650 240,620 185,620 180,570'),
  b('405,570 460,540 570,575 600,600 560,650 440,640 405,570'),
  b('600,600 680,560 660,640 640,680'),
  b('380,650 390,760 470,830 540,820 560,900'),
  b('130,760 230,760 290,860'), b('230,760 240,690 330,650'), b('300,730 380,720 390,760'), b('330,770 365,900'), b('115,810 220,830 265,850'), b('500,830 520,900 505,985'),
  b('60,745 200,690'), b('200,690 130,650'), b('75,400 90,560 130,640'),
  // South America
  c('790,-120 800,100'), c('750,60 850,140'), c('825,235 850,140'), c('880,285 900,210'), c('830,30 880,-100'),
].map(pts => rough(pts, false, 0.16));

const Lbl = ({ x, y, light, children }) => (
  <text x={x} y={y} textAnchor="middle" fontFamily={cal} fontSize="15.5" fill={light ? '#fff' : '#222'} fontWeight={light ? 700 : 400}>{children}</text>
);
const pa = (px, py) => [1120 + px / 1.742, 664 + py / 3];
const pb = (px, py) => [1900 + px / 1.742, 664 + py / 3];
const LABELS = [
  [pa(730, 468), 'Kanada'], [pa(735, 530), '$1.366.317,00'],
  [pa(678, 662), 'Birleşik Devletler', true], [pa(682, 725), '$1.820.340.264,00', true],
  [pa(900, 1200), 'Brezilya'], [pa(922, 1263), '$302.851.077,00'], [pa(1335, 1062), '$-...'],
  [pb(410, 408), 'Rusya'], [pb(413, 470), '$1.687.131,00'], [pb(330, 585), '$-...'],
  [pb(537, 702), 'Çin'], [pb(540, 765), '$7.861.887,00'],
  [[1120 + 892 / 1.742, 1054 + 443 / 3], '$-...'],
  [[1900 + 753 / 1.742, 1054 + 297 / 3], 'Avustralya'], [[1900 + 757 / 1.742, 1054 + 360 / 3], '$76.453.915,00'],
];

const WorldMap = () => (
  <MapChart $x={1133} $y={671} $w={1594} $h={728}>
    <ChartSvg viewBox="1133 671 1594 728">
      {SHAPES.map(([fill, pts], i) => (
        <polygon key={i} points={pts} fill={fill} stroke="#edf1f8" strokeWidth="0.9" strokeLinejoin="round" />
      ))}
      <polygon points={ANTARCTICA} fill={NODATA} stroke="#edf1f8" strokeWidth="0.9" />
      {BORDERS.map((pts, i) => (
        <polyline key={i} points={pts} fill="none" stroke="#edf1f8" strokeWidth="0.8" />
      ))}
      <polyline points={a('250,535 300,530 350,520 440,480')} fill="none" stroke="#fff" strokeWidth="1.2" strokeDasharray="2 3" />
      <circle cx={1120 + 283 / 1.742} cy={660 + 937 / 3} r="1.3" fill="#34568f" />
      {LABELS.map(([[x, y], t, light], i) => (
        <Lbl key={i} x={x} y={y} light={light}>{t}</Lbl>
      ))}
      <text x="2514" y="1368" textAnchor="end" fontFamily={cal} fontSize="11.5" fill="#666">Bing ile güçlendirilmiştir</text>
      <text x="2512" y="1382" textAnchor="end" fontFamily={cal} fontSize="11.3" fill="#555">© Australian Bureau of Statistics, GeoNames, Microsoft, Navinfo, OpenStreetMap, TomTom, Wikipedia, Zenrin</text>
    </ChartSvg>
    <MapTitle>Ülke BazlıToplam Kar Grafiği (Min-Max)</MapTitle>
    <Legend>
      Toplam Profit
      <LegendBody>
        <LegendBar />
        <LegendTick $t={-9}>$1.820.340.264,00</LegendTick>
        <LegendTick $t={120}>$-337.368.412,00</LegendTick>
      </LegendBody>
    </Legend>
    <Pointer width="24" height="38" viewBox="0 0 24 38">
      <path d="M2 1v30l7-6 5 12 6-3-5-11h9z" fill="#0c0c0c" stroke="#fff" strokeWidth="1.4" />
    </Pointer>
    <Tooltip>{'Seri "Toplam Profit" Nokta "Russia"\nDeğer:  $1.687.131,00'}</Tooltip>
  </MapChart>
);

const SHEET_TABS = [['instructions', 200], ['data', 158], ['ship_mode', 190], ['order_location', 232], ['Kategori', 160], ['İç görü çıkarma', 246], ['1', 158], ['2', 158, true], ['3', 158], ['4', 158], ['Veri Kontrol', 204]];

export default function App() {
  return (
    <Page>
      <GlobalStyle />
      <MenuBar>
        <MenuTab $active>Giriş</MenuTab>
        {['Ekle', 'Çiz', 'Sayfa Düzeni', 'Formüller', 'Veri', 'Gözden Geçir', 'Görünüm'].map(t => (
          <MenuTab key={t}>{t}</MenuTab>
        ))}
        <Share>
          <PersonPlus />
          Paylaş
          <ShareGap />
          <ChevronUp />
        </Share>
      </MenuBar>

      <Ribbon>
        <Group $w={212} $pl={14}>
          <BigTool $w={100}>
            <ToolArt>
              <PasteIcon />
              <Caret />
            </ToolArt>
            <ToolLabel>Yapıştır</ToolLabel>
          </BigTool>
          <SmallCol $w={80}>
            <SmallTool $pl={21}><CutIcon /></SmallTool>
            <SmallTool $pl={21}><CopyIcon /><Caret /></SmallTool>
            <SmallTool $pl={18}><PainterIcon /></SmallTool>
          </SmallCol>
        </Group>

        <Group $w={484} $pl={20}>
          <Stack>
            <Line>
              <Seg $w={207}>
                <SegBtn $left $w={179}>Calibri (Göv...</SegBtn>
                <SegBtn><Caret /></SegBtn>
              </Seg>
              <Seg $w={102}>
                <SegBtn $left $w={75}>14</SegBtn>
                <SegBtn><Caret /></SegBtn>
              </Seg>
              <Seg $w={115}>
                <SegBtn $w={58}><GlyphA>A</GlyphA><SmallTriUp c="#5b9cec" /></SegBtn>
                <SegBtn><GlyphA $size={25}>A</GlyphA><SmallTriDown c="#5b9cec" /></SegBtn>
              </Seg>
            </Line>
            <Line>
              <Seg $w={194}>
                <SegBtn $w={58}><GlyphA $bold>K</GlyphA></SegBtn>
                <SegBtn $w={58}><GlyphA $italic $serif>T</GlyphA></SegBtn>
                <SegBtn $w={54}><GlyphA $under $size={26}>A</GlyphA></SegBtn>
                <SegBtn><Caret /></SegBtn>
              </Seg>
              <Seg $w={77}>
                <SegBtn $w={54}><BorderIcon /></SegBtn>
                <SegBtn><Caret /></SegBtn>
              </Seg>
              <Seg $w={153}>
                <SegBtn $w={50}><BucketIcon /></SegBtn>
                <SegBtn $w={23}><Caret /></SegBtn>
                <SegBtn $w={58}><GlyphA $under $size={28}>A</GlyphA></SegBtn>
                <SegBtn><Caret /></SegBtn>
              </Seg>
            </Line>
          </Stack>
        </Group>

        <Group $w={337} $pl={20}>
          <Stack>
            <Line>
              <Seg $w={173}>
                <SegBtn $w={57}><VAlignIcon y={6} /></SegBtn>
                <SegBtn $w={59}><VAlignIcon y={15} /></SegBtn>
                <SegBtn $on><VAlignIcon y={22} /></SegBtn>
              </Seg>
              <Seg $w={71}>
                <SegBtn $w={49}><OrientIcon /></SegBtn>
                <SegBtn><Caret /></SegBtn>
              </Seg>
            </Line>
            <Line>
              <Seg $w={172}>
                <SegBtn $w={58}><ParaLines rows={[[0, 1, 30], [0, 7, 20], [0, 13, 30], [0, 19, 22]]} w={30} /></SegBtn>
                <SegBtn $w={58} $on><ParaLines rows={[[0, 1, 28], [5, 7, 18], [0, 13, 28], [4, 19, 20]]} w={28} /></SegBtn>
                <SegBtn><ParaLines rows={[[0, 1, 30], [10, 7, 20], [0, 13, 30], [8, 19, 22]]} w={30} /></SegBtn>
              </Seg>
              <Seg $w={116}>
                <SegBtn $w={58}><IndentIcon /></SegBtn>
                <SegBtn><IndentIcon flip /></SegBtn>
              </Seg>
            </Line>
          </Stack>
        </Group>

        <Group $w={297} $pl={18}>
          <Stack>
            <WrapBtn>
              <WrapIcon />
              Metni Kaydır
              <WrapGap />
              <Caret />
            </WrapBtn>
            <MergeBtn>
              <MergeIcon />
              Birleştir ve Ortala
              <MergeEnd><Caret /></MergeEnd>
            </MergeBtn>
          </Stack>
        </Group>

        <Group $w={352} $pl={19}>
          <Stack>
            <Line>
              <Seg $w={315}>
                <SegBtn $left $w={287}>Genel</SegBtn>
                <SegBtn><Caret /></SegBtn>
              </Seg>
            </Line>
            <Line $gap={10}>
              <Seg $w={189}>
                <SegBtn $w={49}><CoinsIcon /></SegBtn>
                <SegBtn $w={23}><Caret /></SegBtn>
                <SegBtn $w={59}><GlyphA $size={33}>%</GlyphA></SegBtn>
                <SegBtn><GlyphA $size={19}>000</GlyphA></SegBtn>
              </Seg>
              <Seg $w={116}>
                <SegBtn $w={58}><DecIcon /></SegBtn>
                <SegBtn><DecIcon more /></SegBtn>
              </Seg>
            </Line>
          </Stack>
        </Group>

        <Group $w={420.5} $pl={8}>
          <BigTool $w={164}>
            <ToolArt><CondIcon /><Caret /></ToolArt>
            <ToolLabel>Koşullu<br />Biçimlendirme</ToolLabel>
          </BigTool>
          <BigTool $w={128}>
            <ToolArt><TableIcon /><Caret /></ToolArt>
            <ToolLabel>Tablo Olarak<br />Biçimlendir</ToolLabel>
          </BigTool>
          <BigTool $w={110}>
            <ToolArt><StyleIcon /><Caret /></ToolArt>
            <ToolLabel>Hücre<br />Stilleri</ToolLabel>
          </BigTool>
        </Group>

        <Group $w={336.5} $pl={12}>
          <BigTool $w={103.5}>
            <ToolArt><InsertIcon /><Caret /></ToolArt>
            <ToolLabel>Ekle</ToolLabel>
          </BigTool>
          <BigTool $w={103.5}>
            <ToolArt><DeleteIcon /><Caret /></ToolArt>
            <ToolLabel>Sil</ToolLabel>
          </BigTool>
          <BigTool $w={103.5}>
            <ToolArt><FormatIcon /><Caret /></ToolArt>
            <ToolLabel>Biçim</ToolLabel>
          </BigTool>
        </Group>

        <Group $w={441} $pl={26} $last>
          <SmallCol $w={65}>
            <SmallTool $pl={5}><SigmaIcon /><Caret /></SmallTool>
            <SmallTool $pl={5}><FillIcon /><Caret /></SmallTool>
            <SmallTool><EraserIcon /><Caret /></SmallTool>
          </SmallCol>
          <BigTool $w={110}>
            <ToolArt><SortIcon /><Caret /></ToolArt>
            <ToolLabel>Sırala ve<br />Filtrele</ToolLabel>
          </BigTool>
          <BigTool $w={96}>
            <ToolArt><FindIcon /><Caret /></ToolArt>
            <ToolLabel>Bul ve<br />Seç</ToolLabel>
          </BigTool>
        </Group>
      </Ribbon>

      <Strip $h={8} $c="#2b2b2b" />
      <FormulaBar>
        <NameBox>
          G42
          <Updown><UpTri /><DownTri /></Updown>
        </NameBox>
        <FxZone>
          <CrossMark />
          <CheckMark />
          <FxMark>fx</FxMark>
        </FxZone>
        <FormulaField>=İNDİS(B41:B187;KAÇINCI(MİN(C41:C187);C41:C187;0))</FormulaField>
        <FieldEnd><Caret /></FieldEnd>
      </FormulaBar>
      <Strip $h={6} $c="#2b2b2b" />
      <Strip $h={5} $c="#d8d8d8" />
      <Strip $h={1} $c="#131313" />

      <ColHeader>
        <Corner>
          <svg width="44" height="36" viewBox="0 0 44 36"><path d="M40 5v29H10z" fill="#555" /></svg>
        </Corner>
        {COLS.map(([t, w], i) => (
          <ColCell key={i} $w={w}>{t}</ColCell>
        ))}
      </ColHeader>

      <Body>
        <RowHeads>
          {ROW_NUMS.map(n => (
            <RowHead key={n} $h={rowHeights[n] || 30.08} $on={n === 42}>{n}</RowHead>
          ))}
        </RowHeads>
        <Sheet>
          {BAR_ROWS.map(r => (
            <DataRow key={r.n[0] + r.q[0]} $h={r.h} $ruled>
              <DataCell $w={44} />
              <BarCell w={248} val={r.n} />
              <BarCell w={210} val={r.o} />
              <DataCell $w={220} $pl={5}>{r.p}</DataCell>
              <BarCell w={190} val={r.q} />
            </DataRow>
          ))}
          <DataRow $h={30} />
          <DataRow $h={30} $ruled />
          {ICON_ROWS.map(r => (
            <DataRow key={r.n} $h={r.h} $ruled>
              <DataCell $w={44} $pl={0} $pr={0}><Clip>{r.m}</Clip></DataCell>
              <DataCell $w={248} $pl={5} $pr={r.cur ? 10 : 6} $tri>
                <DownArrow />
                {r.cur && <Dollar>$</Dollar>}
                <Money>{r.n}</Money>
              </DataCell>
              <DataCell $w={210} $pl={5} $pr={r.cur ? 10 : 6} $tri>
                <UpArrow />
                {r.cur && <Dollar>$</Dollar>}
                <Money>{r.o}</Money>
              </DataCell>
              <DataCell $w={220} $pl={5} $pr={6} $tri>
                <DownArrow />
                <Money>{r.p}</Money>
              </DataCell>
              <DataCell $w={190} $pl={5} $pr={r.cur ? 10 : 6} $tri>
                <DownArrow />
                {r.cur && <Dollar>$</Dollar>}
                <Money>{r.q}</Money>
              </DataCell>
            </DataRow>
          ))}

          <ParetoChart />
          <ProfitChart />
          <SheetTitle $x={1133} $y={595} $w={1518} $h={30}>ÜLKE BAZLI TOPLAM KAR GRAFİĞİ</SheetTitle>
          <WorldMap />
          <VScroll />
          <HScroll />
        </Sheet>
      </Body>

      <TabBar>
        <TabNav>
          <svg width="14" height="22" viewBox="0 0 14 22"><path d="M14 0v22L0 11z" fill="#6c6c6c" /></svg>
          <svg width="14" height="22" viewBox="0 0 14 22"><path d="M0 0v22l14-11z" fill="#6c6c6c" /></svg>
        </TabNav>
        {SHEET_TABS.map(([t, w, on]) => (
          <SheetTab key={t} $w={w} $active={on}>{t}</SheetTab>
        ))}
        <AddTab>+</AddTab>
        <BottomLine />
        <BottomThumb />
      </TabBar>
    </Page>
  );
}
